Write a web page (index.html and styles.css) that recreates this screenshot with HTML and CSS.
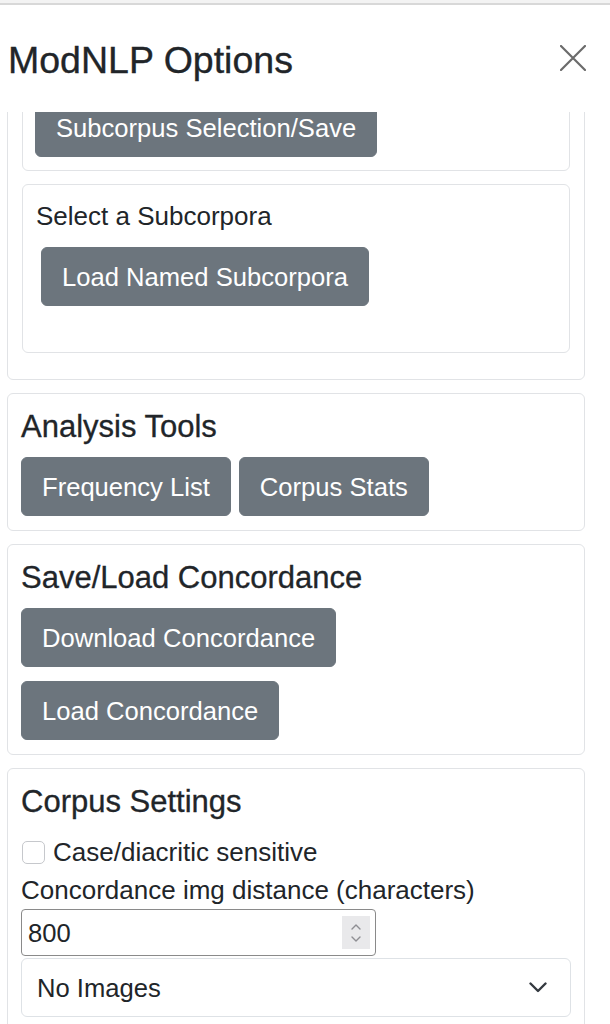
FILE: index.html
```html
<!DOCTYPE html>
<html lang="en">
<head>
<meta charset="utf-8">
<title>ModNLP Options</title>
<link rel="stylesheet" href="styles.css">
</head>
<body>
<div class="topbar"></div>
<div class="header">
  <h4 class="title">ModNLP Options</h4>
  <svg class="close" viewBox="0 0 26 26" aria-label="Close"><path d="M1 1 L25 25 M25 1 L1 25" stroke="#6b6b6b" stroke-width="2.2" fill="none" stroke-linecap="round"/></svg>
</div>
<div class="body">
  <div class="card outer">
    <div class="card inner inner-a">
      <span class="btn">Subcorpus Selection/Save</span>
    </div>
    <div class="card inner inner-b">
      <div class="label">Select a Subcorpora</div>
      <div class="btn-wrap"><span class="btn">Load Named Subcorpora</span></div>
    </div>
  </div>

  <div class="card">
    <h5 class="heading">Analysis Tools</h5>
    <div class="btn-row">
      <span class="btn">Frequency List</span>
      <span class="btn">Corpus Stats</span>
    </div>
  </div>

  <div class="card">
    <h5 class="heading">Save/Load Concordance</h5>
    <div class="btn-col">
      <span class="btn">Download Concordance</span>
      <span class="btn">Load Concordance</span>
    </div>
  </div>

  <div class="card last">
    <h5 class="heading">Corpus Settings</h5>
    <div class="check-row">
      <span class="checkbox"></span>
      <span class="label">Case/diacritic sensitive</span>
    </div>
    <div class="label">Concordance img distance (characters)</div>
    <div class="numbox">
      <span class="numval">800</span>
      <span class="spin">
        <svg viewBox="0 0 12 26" width="12" height="26"><path d="M2 9 L6 5 L10 9 M2 17 L6 21 L10 17" stroke="#8e8e93" stroke-width="1.4" fill="none" stroke-linecap="round" stroke-linejoin="round"/></svg>
      </span>
    </div>
    <div class="select">
      <span>No Images</span>
      <svg viewBox="0 0 18 11" width="18" height="11"><path d="M1.5 1.5 L9 9 L16.5 1.5" stroke="#343a40" stroke-width="2.4" fill="none" stroke-linecap="round" stroke-linejoin="round"/></svg>
    </div>
  </div>
</div>
</body>
</html>
```

FILE: styles.css
```css
* { box-sizing: border-box; }
html, body { margin: 0; padding: 0; background: #fff; }
body {
  font-family: "Liberation Sans", Arial, sans-serif;
  color: #212529;
  font-size: 25.6px;
  line-height: 36px;
  width: 610px;
  height: 1024px;
  overflow: hidden;
}
.topbar {
  height: 5px;
  background: #f3f3f3;
  border-bottom: 2px solid #d8d8d8;
}
.header {
  display: flex;
  justify-content: space-between;
  align-items: flex-start;
  height: 107px;
  padding: 33px 24px 0 8px;
}
.title {
  margin: 0;
  font-size: 37.5px;
  line-height: 44px;
  font-weight: 400;
  -webkit-text-stroke: 0.35px #212529;
}
.close {
  margin-top: 7px;
  width: 26px;
  height: 26px;
}
.body {
  height: 912px;
  overflow: hidden;
  padding: 0 25px 0 7px;
}
.card {
  border: 1px solid #e1e3e6;
  border-radius: 6px;
  padding: 13px 13px 14px;
  background: #fff;
}
.card + .card { margin-top: 13px; }
.outer {
  margin-top: -42px;
  padding: 14px;
}
.inner-a { padding: 12px 12px 13px; }
.inner-b { margin-bottom: 12px; }
.label { font-size: 26px; }
.btn-wrap {
  margin: 13px 0 32px 5px;
}
.btn {
  display: inline-block;
  background: #6c757d;
  color: #fff;
  border: 1px solid #6c757d;
  border-radius: 6px;
  padding: 10.5px 20px;
  font-size: 25.6px;
  line-height: 36px;
  white-space: nowrap;
}
.heading {
  margin: 0 0 12px;
  padding-top: 2px;
  font-size: 31px;
  line-height: 36px;
  font-weight: 400;
  -webkit-text-stroke: 0.3px #212529;
}
.btn-row { display: flex; gap: 8px; }
.btn-col {
  display: flex;
  flex-direction: column;
  align-items: flex-start;
  gap: 14px;
}
.last { height: 300px; }
.check-row {
  display: flex;
  align-items: center;
  gap: 8px;
  height: 40px;
}
.checkbox {
  width: 23px;
  height: 23px;
  margin-left: 1px;
  border: 1px solid #c6c8cc;
  border-radius: 5px;
  background: #fff;
}
.numbox {
  display: flex;
  align-items: center;
  justify-content: space-between;
  width: 355px;
  height: 47px;
  margin-top: 1px;
  border: 1.5px solid #8a8a8a;
  border-radius: 4px;
  padding: 0 5px 0 6px;
}
.spin {
  display: flex;
  align-items: center;
  justify-content: center;
  width: 28px;
  height: 33px;
  background: #e9e9eb;
}
.select {
  display: flex;
  align-items: center;
  justify-content: space-between;
  width: 550px;
  height: 59px;
  margin-top: 2px;
  border: 1px solid #dee2e6;
  border-radius: 6px;
  padding: 0 23px 0 15px;
}
```
